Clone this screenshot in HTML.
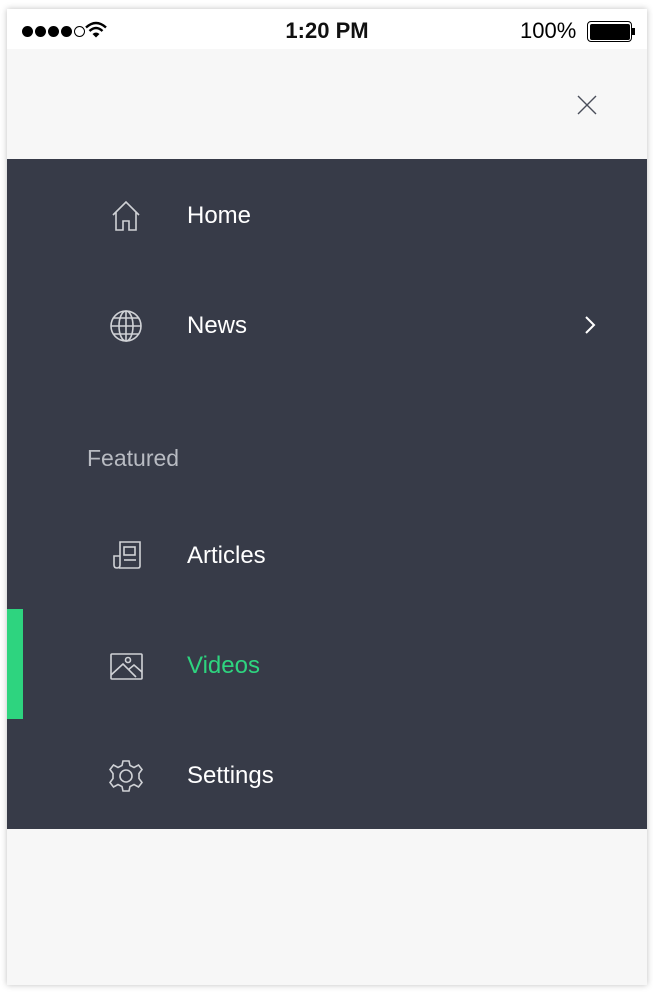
<!DOCTYPE html>
<html><head><style>
*{margin:0;padding:0;box-sizing:border-box}
body{width:653px;height:997px;background:#fff;font-family:"Liberation Sans",sans-serif;position:relative;overflow:hidden}
.frame{position:absolute;left:7px;top:9px;width:640px;height:976px;background:#f7f7f7;box-shadow:0 0 6px rgba(0,0,0,0.25)}
.status{position:absolute;left:0;top:0;width:640px;height:40px;background:#fff}
.dark{position:absolute;left:0;top:150px;width:640px;height:670px;background:#373b48}
.item{position:absolute;left:180px;font-size:24px;color:#fff;line-height:28px}
.ic{position:absolute;left:102px}
</style></head><body>
<div class="frame">
 <div class="status">
  <div style="position:absolute;left:15px;top:17px;font-size:0">
   <span style="display:inline-block;width:11px;height:11px;border-radius:50%;background:#000;margin-right:2px"></span><span style="display:inline-block;width:11px;height:11px;border-radius:50%;background:#000;margin-right:2px"></span><span style="display:inline-block;width:11px;height:11px;border-radius:50%;background:#000;margin-right:2px"></span><span style="display:inline-block;width:11px;height:11px;border-radius:50%;background:#000;margin-right:2px"></span><span style="display:inline-block;width:11px;height:11px;border-radius:50%;border:1px solid #000"></span>
  </div>
  <svg style="position:absolute;left:78px;top:12px" width="22" height="18" viewBox="0 0 22 17"><path d="M1 6 Q11 -3 21 6" stroke="#000" stroke-width="2.4" fill="none"/><path d="M4.5 9.5 Q11 3.5 17.5 9.5" stroke="#000" stroke-width="2.4" fill="none"/><path d="M7.5 12.5 L11 16 L14.5 12.5 Q11 9.5 7.5 12.5Z" fill="#000"/></svg>
  <div style="position:absolute;left:0;width:640px;top:9px;text-align:center;font-size:22px;font-weight:bold;color:#111">1:20 PM</div>
  <div style="position:absolute;left:513px;top:9px;font-size:22px;color:#000">100%</div>
  <div style="position:absolute;left:580px;top:12px;width:45px;height:21px;border:1.5px solid #000;border-radius:4px;padding:1.5px"><div style="width:100%;height:100%;background:#000;border-radius:2px"></div></div>
  <div style="position:absolute;left:625px;top:19px;width:3px;height:7px;background:#000"></div>
 </div>
 <svg style="position:absolute;left:570px;top:86px" width="20" height="20" viewBox="0 0 20 20"><path d="M1 1L19 19M19 1L1 19" stroke="#4a4e5a" stroke-width="1.4"/></svg>
 <div class="dark">
  <svg class="ic" style="top:40px" width="34" height="34" viewBox="0 0 34 34" fill="none" stroke="#d0d2d6" stroke-width="1.6"><path d="M4 16 L17 3 L30 16 M7 13 V31 H14 V22 H20 V31 H27 V13"/></svg>
  <div class="item" style="top:43px">Home</div>
  <svg class="ic" style="top:150px" width="34" height="34" viewBox="0 0 34 34" fill="none" stroke="#d0d2d6" stroke-width="1.6"><circle cx="17" cy="17" r="15"/><ellipse cx="17" cy="17" rx="7" ry="15"/><path d="M17 2V32M2 17H32M5 9H29M5 25H29"/></svg>
  <div class="item" style="top:153px">News</div>
  <svg style="position:absolute;left:577px;top:157px" width="12" height="18" viewBox="0 0 12 18"><path d="M2 1L10 9L2 17" stroke="#fff" stroke-width="2" fill="none"/></svg>
  <div style="position:absolute;left:80px;top:286px;font-size:23px;color:#b8bbc2">Featured</div>
  <svg class="ic" style="top:380px" width="34" height="34" viewBox="0 0 34 34" fill="none" stroke="#d0d2d6" stroke-width="1.6"><path d="M10 29 H29 Q31 29 31 27 V3 H11 V26 Q11 29 8 29 Q5 29 5 26 V17 H11"/><rect x="15" y="8" width="11" height="8"/><path d="M15 21H27"/></svg>
  <div class="item" style="top:383px">Articles</div>
  <div style="position:absolute;left:0;top:450px;width:16px;height:110px;background:#2ed47f"></div>
  <svg class="ic" style="top:490px" width="34" height="34" viewBox="0 0 34 34" fill="none" stroke="#d0d2d6" stroke-width="1.6"><rect x="2" y="5" width="31" height="25" rx="1"/><path d="M2 26 L14 15 L27 28 M19 21 L25 16 L33 23"/><circle cx="19" cy="11" r="2.5"/></svg>
  <div class="item" style="top:493px;color:#2ed47f">Videos</div>
  <svg class="ic" style="top:600px" width="34" height="34" viewBox="0 0 34 34" fill="none" stroke="#d0d2d6" stroke-width="1.6"><path d="M14 2H20L21 6.5L25 8.5L29.5 6L33 10.5L30 14.5V19.5L33 23.5L29.5 28L25 25.5L21 27.5L20 32H14L13 27.5L9 25.5L4.5 28L1 23.5L4 19.5V14.5L1 10.5L4.5 6L9 8.5L13 6.5Z"/><circle cx="17" cy="17" r="6"/></svg>
  <div class="item" style="top:603px">Settings</div>
 </div>
</div>
</body></html>
